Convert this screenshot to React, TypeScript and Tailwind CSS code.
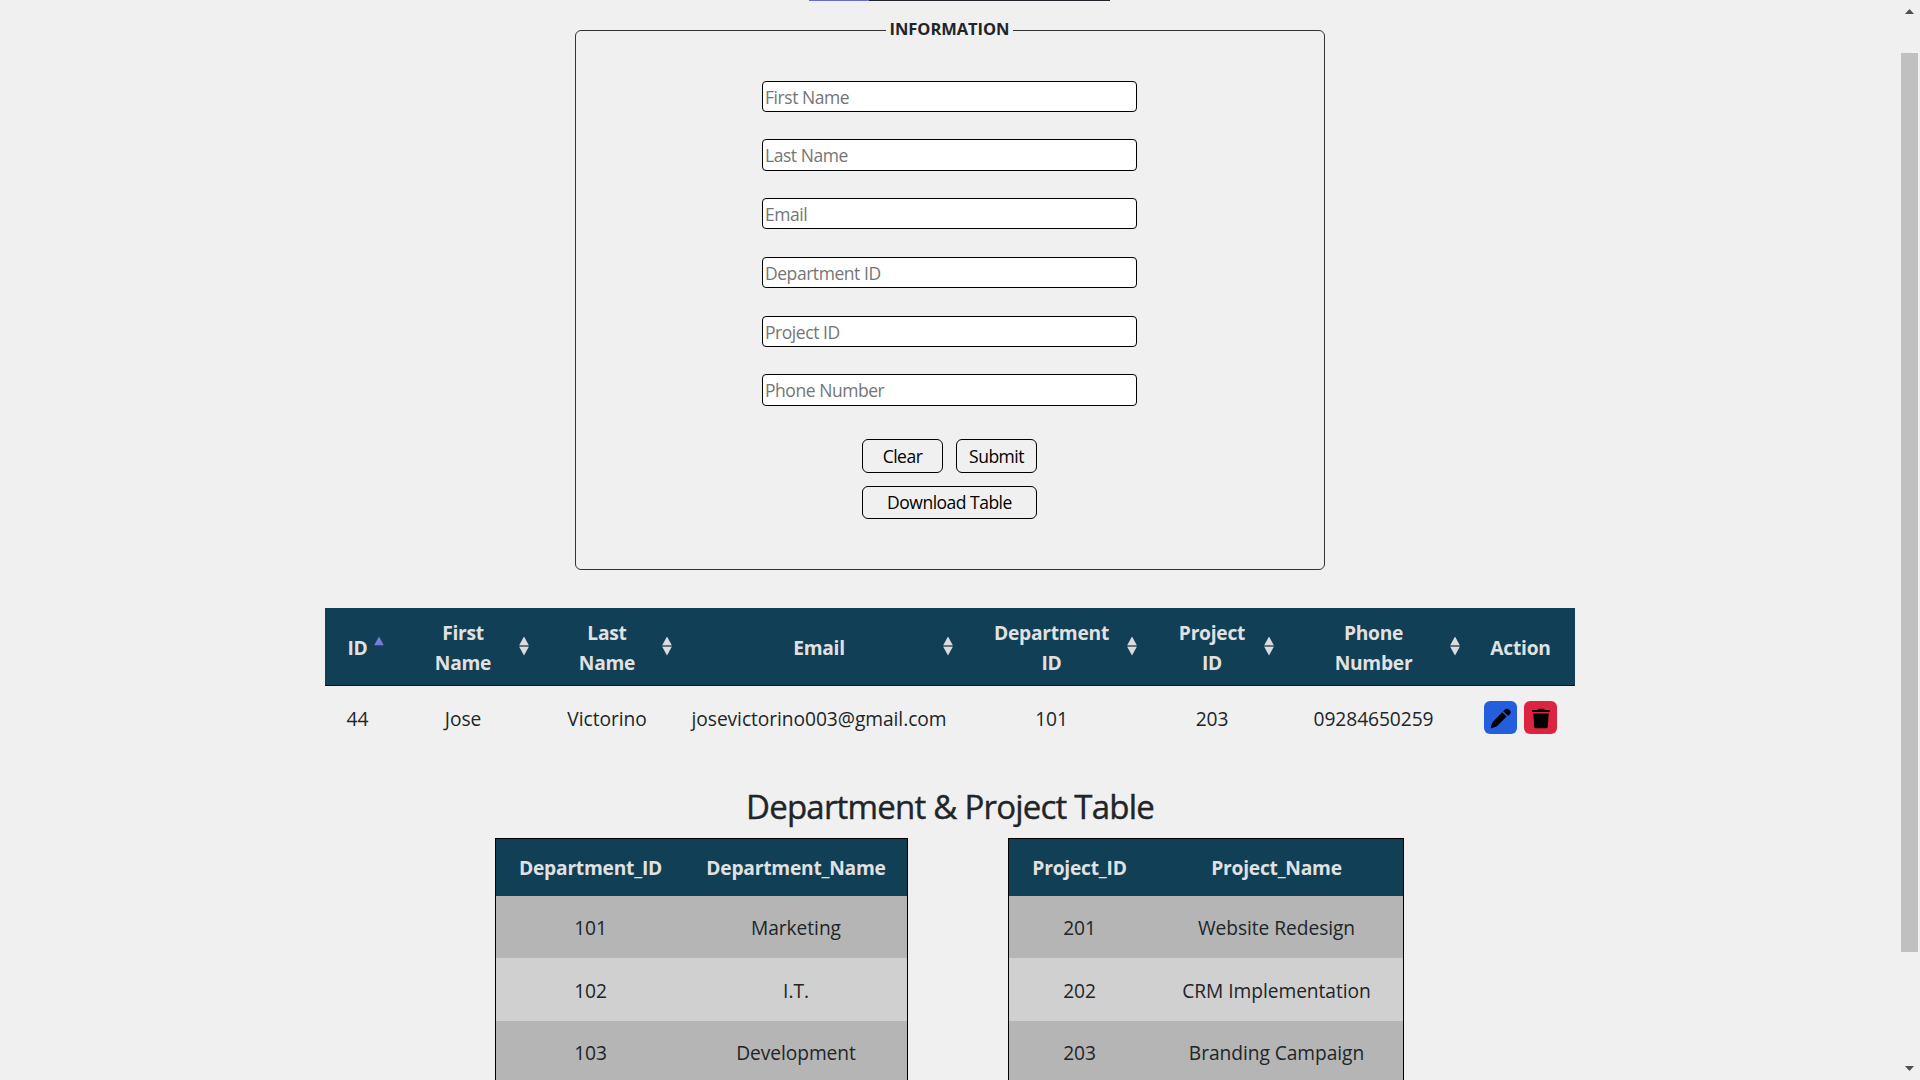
import React from 'react';

const fields = ['First Name', 'Last Name', 'Email', 'Department ID', 'Project ID', 'Phone Number'];

const columns = [
  { lines: ['ID'], sort: 'asc' },
  { lines: ['First', 'Name'], sort: 'both' },
  { lines: ['Last', 'Name'], sort: 'both' },
  { lines: ['Email'], sort: 'both' },
  { lines: ['Department', 'ID'], sort: 'both' },
  { lines: ['Project', 'ID'], sort: 'both' },
  { lines: ['Phone', 'Number'], sort: 'both' },
  { lines: ['Action'], sort: 'none' },
];

const employee = ['44', 'Jose', 'Victorino', 'josevictorino003@gmail.com', '101', '203', '09284650259'];

const departments = [['101', 'Marketing'], ['102', 'I.T.'], ['103', 'Development']];
const projects = [['201', 'Website Redesign'], ['202', 'CRM Implementation'], ['203', 'Branding Campaign']];

function SortIcon({ kind }: { kind: string }) {
  return (
    <svg className="absolute right-[6px] top-[28px]" width="12" height="22" viewBox="0 0 12 22">
      <path d="M6 0.5L10.8 9.3H1.2Z" fill={kind === 'asc' ? '#7b7bdb' : '#dcdcdc'} />
      {kind === 'both' && <path d="M6 19.5L10.8 10.7H1.2Z" fill="#dcdcdc" />}
      {kind === 'both' && <path d="M1.5 10H10.5" stroke="#6f8794" />}
    </svg>
  );
}

function PencilIcon() {
  return (
    <svg width="33" height="33" viewBox="0 0 33 33">
      <path d="M18.2 11.3L22.6 15.6L13.4 24.8C12.4 25.8 9.6 26.6 7.4 27.2C6.8 27.3 6.6 27 6.8 26.4C7.3 24.2 8.2 21.4 9.2 20.4Z" />
      <path d="M19.2 10.3L21 8.5C22.2 7.4 23.6 7.4 24.8 8.5L25.9 9.6C27 10.8 27 12 25.9 13.2L24 14.8Z" />
    </svg>
  );
}

function TrashIcon() {
  return (
    <svg width="33" height="33" viewBox="0 0 33 33">
      <path d="M8.6 9H13.6C14 8.2 14.6 7.8 15.4 7.8H19C19.8 7.8 20.4 8.2 20.8 9H25.2C26 9 26 10.9 25.2 10.9H8.6C7.8 10.9 7.8 9 8.6 9Z" />
      <path d="M9.3 12.4H24.7L23.8 25.6C23.7 26.7 23.2 27.2 22.2 27.2H11.8C10.8 27.2 10.3 26.7 10.2 25.6Z" />
    </svg>
  );
}

function LookupTable({ head, rows, grid, width }: { head: string[]; rows: string[][]; grid: string; width: string }) {
  return (
    <div className={`${width} h-[300px] border border-black text-[19.2px] tracking-[-0.06px]`}>
      <div className={`grid ${grid} h-[57px] items-center bg-[#103f56] text-center font-bold tracking-[-0.22px] text-[#e1e1e1]`}>
        {head.map((h) => <div key={h} className="pt-0.5 pr-px">{h}</div>)}
      </div>
      {rows.map((r, i) => (
        <div key={r[0]} className={`grid ${grid} ${i === 0 ? 'h-[62px]' : 'h-[63px]'} items-center text-center ${i % 2 ? 'bg-[#d0d0d0]' : 'bg-[#b5b5b5]'}`}>
          {r.map((c) => <div key={c} className={i === 1 ? 'pt-[3px] pr-px' : 'pt-0.5 pr-px'}>{c}</div>)}
        </div>
      ))}
    </div>
  );
}

const mainGrid = 'grid grid-cols-[66px_145px_143px_281px_184px_137px_186px_108px]';

export default function App() {
  return (
    <div className="flex h-[1080px] w-[1920px] overflow-hidden bg-[#f0f0f0] font-['Open_Sans',sans-serif] text-[#212529]">
      <main className="flex w-[1900px] flex-col items-center">
        <div className="ml-[19px] flex h-px w-[301px] shrink-0">
          <div className="w-[60px] bg-[#6a6ad4]" />
          <div className="flex-1 bg-[#212529]" />
        </div>
        <section className="mt-[29px] flex h-[540px] w-[750px] shrink-0 flex-col items-center rounded-[6px] border border-[#333]">
          <h2 className="-mt-[14px] mr-px h-[24px] bg-[#f0f0f0] px-1 text-[16.5px] leading-[24px] font-bold tracking-[-0.05px] whitespace-nowrap">INFORMATION</h2>
          <div className="mt-[39.6px] mr-px flex flex-col gap-[27.5px]">
            {fields.map((f) => (
              <input
                key={f}
                placeholder={f}
                className="h-[31.25px] w-[375px] rounded-[4px] border border-black bg-white px-[2px] pt-px text-[17.5px] tracking-[-0.45px] placeholder:text-[#757575]"
              />
            ))}
          </div>
          <div className="mt-[33.4px] mr-px grid w-[175px] grid-cols-2 gap-x-[13px] gap-y-[13px] text-[17.5px] tracking-[-0.5px] text-black">
            <button className="h-[34px] rounded-[6px] border border-black pt-px">Clear</button>
            <button className="h-[34px] rounded-[6px] border border-black pt-px">Submit</button>
            <button className="col-span-2 h-[33px] rounded-[6px] border border-black">Download Table</button>
          </div>
        </section>
        <section className="mt-[38px] w-[1250px] shrink-0 text-[19.2px]">
          <div className={`${mainGrid} h-[78px] items-center border-b border-[#111] bg-[#103f56] text-center leading-[30px] font-bold tracking-[-0.25px] text-[#e1e1e1]`}>
            {columns.map((c) => (
              <div key={c.lines.join(' ')} className="relative flex h-[77px] flex-col justify-center pt-[3px] pr-px">
                {c.lines.map((l) => <div key={l}>{l}</div>)}
                {c.sort !== 'none' && <SortIcon kind={c.sort} />}
              </div>
            ))}
          </div>
          <div className={`${mainGrid} h-[64px] items-center text-center tracking-[-0.06px]`}>
            {employee.map((c) => <div key={c} className="pt-0.5 pr-px">{c}</div>)}
            <div className="mr-[2px] mb-[2px] flex justify-center gap-[7px]">
              <button className="h-[33px] w-[33px] rounded-[6px] bg-[#235fdc]"><PencilIcon /></button>
              <button className="h-[33px] w-[33px] rounded-[6px] bg-[#dc2340]"><TrashIcon /></button>
            </div>
          </div>
        </section>
        <h1 className="mt-[36px] h-[42px] shrink-0 text-[33px] leading-[42px] font-medium tracking-[-0.78px] whitespace-nowrap [-webkit-text-stroke:0.4px_#212529]">Department &amp; Project Table</h1>
        <section className="mt-[10px] mr-px flex gap-[100px]">
          <LookupTable head={['Department_ID', 'Department_Name']} rows={departments} grid="grid-cols-[190px_221px]" width="w-[413px]" />
          <LookupTable head={['Project_ID', 'Project_Name']} rows={projects} grid="grid-cols-[142px_252px]" width="w-[396px]" />
        </section>
      </main>
      <aside className="flex w-[19px] flex-col items-center">
        <svg className="mt-[9px] shrink-0" width="9" height="5" viewBox="0 0 9 5"><path d="M4.5 0L9 5H0Z" fill="#505050" /></svg>
        <div className="mt-[39px] h-[899px] w-[17px] shrink-0 bg-[#c0c0c0]" />
        <svg className="mt-[114px] shrink-0" width="9" height="5" viewBox="0 0 9 5"><path d="M0 0H9L4.5 5Z" fill="#505050" /></svg>
      </aside>
    </div>
  );
}
